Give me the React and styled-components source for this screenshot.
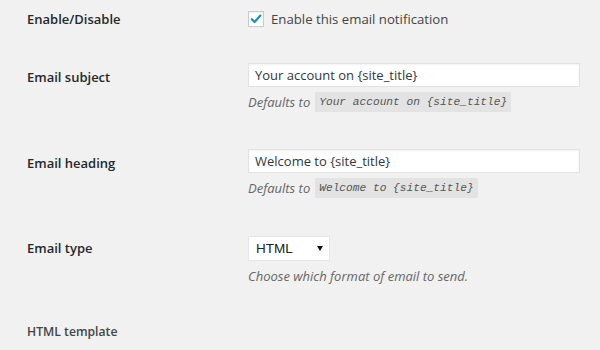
import React from 'react';
import styled, { createGlobalStyle } from 'styled-components';

const GlobalStyle = createGlobalStyle`
  html, body {
    margin: 0;
    padding: 0;
    background: #f1f1f1;
  }
  body {
    font-family: 'Open Sans', 'Noto Sans', sans-serif;
    color: #444;
  }
`;

export default function App() {
  return (
    <>
      <GlobalStyle />
      <Page>
        <Row gap={10}>
          <Label pad={0}>Enable/Disable</Label>
          <CheckLine>
            <CheckBox>
              <svg width="12" height="12" viewBox="0 0 12 12">
                <path d="M1.8 6.2 L4.6 9 L10.4 2.6" fill="none" stroke="#1e8cbe" strokeWidth="2.2" strokeLinecap="round" strokeLinejoin="round" />
              </svg>
            </CheckBox>
            <span>Enable this email notification</span>
          </CheckLine>
        </Row>

        <Row gap={35}>
          <Label pad={5}>Email subject</Label>
          <Field>
            <TextInput>Your account on {'{site_title}'}</TextInput>
            <Description>
              Defaults to
              <Code>Your account on {'{site_title}'}</Code>
            </Description>
          </Field>
        </Row>

        <Row gap={37}>
          <Label pad={5}>Email heading</Label>
          <Field>
            <TextInput>Welcome to {'{site_title}'}</TextInput>
            <Description>
              Defaults to
              <Code>Welcome to {'{site_title}'}</Code>
            </Description>
          </Field>
        </Row>

        <Row gap={38}>
          <Label pad={3}>Email type</Label>
          <Field>
            <Select>
              HTML
              <Arrow />
            </Select>
            <Description>Choose which format of email to send.</Description>
          </Field>
        </Row>

        <Row gap={37}>
          <SmallLabel>HTML template</SmallLabel>
        </Row>
      </Page>
    </>
  );
}

const Page = styled.div`
  width: 600px;
  height: 350px;
  padding-left: 27px;
  box-sizing: border-box;
  overflow: hidden;
`;

const Row = styled.div`
  display: grid;
  grid-template-columns: 221px 332px;
  align-items: start;
  margin-top: ${(p) => p.gap}px;
`;

const Label = styled.div`
  padding-top: ${(p) => p.pad}px;
  font-size: 13px;
  line-height: 18px;
  font-weight: 600;
  color: #23282d;
`;

const SmallLabel = styled.div`
  font-size: 12.2px;
  line-height: 18px;
  font-weight: 600;
  color: #444;
`;

const CheckLine = styled.div`
  display: flex;
  align-items: center;
  gap: 7px;
  height: 18px;
  font-size: 13.2px;
  color: #444;
`;

const CheckBox = styled.span`
  display: flex;
  align-items: center;
  justify-content: center;
  width: 14px;
  height: 14px;
  background: #fff;
  border: 1px solid #c8ccd0;
  box-shadow: inset 0 1px 2px rgba(0, 0, 0, 0.07);
`;

const Field = styled.div`
  display: flex;
  flex-direction: column;
  align-items: flex-start;
`;

const TextInput = styled.div`
  box-sizing: border-box;
  width: 332px;
  height: 24px;
  padding: 0 6px;
  background: #fff;
  border: 1px solid #e2e2e2;
  box-shadow: inset 0 1px 2px rgba(0, 0, 0, 0.05);
  font-size: 13px;
  line-height: 22px;
  color: #32373c;
`;

const Description = styled.div`
  display: flex;
  align-items: center;
  gap: 5px;
  margin-top: 5px;
  font-size: 13px;
  line-height: 20px;
  font-style: italic;
  color: #666;
`;

const Code = styled.code`
  padding: 0 4px;
  background: #e3e3e3;
  font-family: 'Liberation Mono', 'DejaVu Sans Mono', monospace;
  font-size: 11.2px;
  line-height: 20px;
  font-style: italic;
  color: #555;
`;

const Select = styled.div`
  box-sizing: border-box;
  display: flex;
  align-items: center;
  justify-content: space-between;
  width: 82px;
  height: 25px;
  padding: 0 6px 0 7px;
  background: #fff;
  border: 1px solid #e6e6e6;
  font-family: 'Liberation Sans', Arial, sans-serif;
  font-size: 13.5px;
  color: #222;
`;

const Arrow = styled.span`
  width: 0;
  height: 0;
  border-left: 3px solid transparent;
  border-right: 3px solid transparent;
  border-top: 5px solid #111;
`;
